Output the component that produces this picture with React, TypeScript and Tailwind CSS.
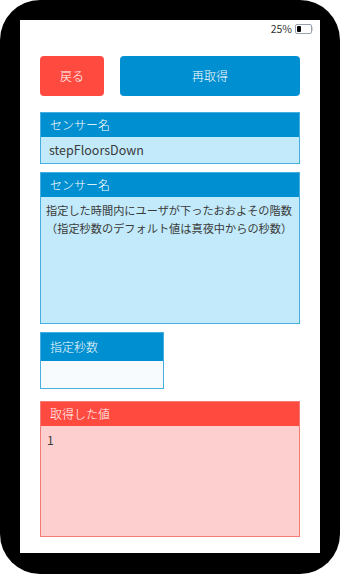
import React from 'react'

const font = { fontFamily: '"Noto Sans CJK JP", "Noto Sans", sans-serif' }

function Battery() {
  return (
    <div className="flex items-center">
      <div className="flex h-[10px] w-[17px] items-center rounded-[2px] border border-gray-400 p-[1px]">
        <div className="h-full w-[4px] rounded-[1px] bg-black" />
      </div>
      <div className="h-[4px] w-[1px] bg-gray-300" />
    </div>
  )
}

export default function App() {
  return (
    <div className="h-[574px] w-[340px] bg-white font-light" style={font}>
      <div className="h-full rounded-[40px] bg-black pt-[20px] pb-[21px] px-[20px]">
        <div className="flex h-full flex-col bg-white px-[20px]">
          <div className="-mr-[13px] flex h-[16px] items-center justify-end gap-[3px] pt-[1px] text-[10.5px] font-normal text-[#333]">
            <span>25%</span>
            <Battery />
          </div>

          <div className="mt-[20px] flex h-[40px] gap-[16px]">
            <button className="w-[64px] rounded-[4px] bg-[#ff4a40] text-[12px] text-white">戻る</button>
            <button className="flex-1 rounded-[4px] bg-[#008fd0] text-[12px] text-white">再取得</button>
          </div>

          <div className="mt-[16px] border border-[#46aee0]">
            <div className="flex h-[24px] items-center bg-[#008fd0] px-[9px] text-[12px] text-white">センサー名</div>
            <div className="flex h-[26px] items-center bg-[#c2eafb] px-[8px] text-[12.5px] font-normal text-[#3a3a3a]">stepFloorsDown</div>
          </div>

          <div className="mt-[8px] border border-[#46aee0]">
            <div className="flex h-[24px] items-center bg-[#008fd0] px-[9px] text-[12px] text-white">センサー名</div>
            <div className="h-[126px] whitespace-nowrap bg-[#c2eafb] px-[5px] pt-[4px] text-[11.2px] font-normal leading-[18px] text-[#3a3a3a]">
              <div>指定した時間内にユーザが下ったおおよその階数</div>
              <div>（指定秒数のデフォルト値は真夜中からの秒数）</div>
            </div>
          </div>

          <div className="mt-[8px] w-[124px] border border-[#46aee0]">
            <div className="flex h-[28px] items-center bg-[#008fd0] px-[9px] text-[12px] text-white">指定秒数</div>
            <div className="h-[27px] bg-[#f8fbfd]" />
          </div>

          <div className="mt-[12px] border border-[#f47a76]">
            <div className="flex h-[24px] items-center bg-[#ff4a40] px-[9px] text-[12px] text-white">取得した値</div>
            <div className="h-[110px] bg-[#fdcfcf] px-[6px] pt-[5px] text-[12px] font-normal text-[#3a3a3a]">1</div>
          </div>
        </div>
      </div>
    </div>
  )
}
